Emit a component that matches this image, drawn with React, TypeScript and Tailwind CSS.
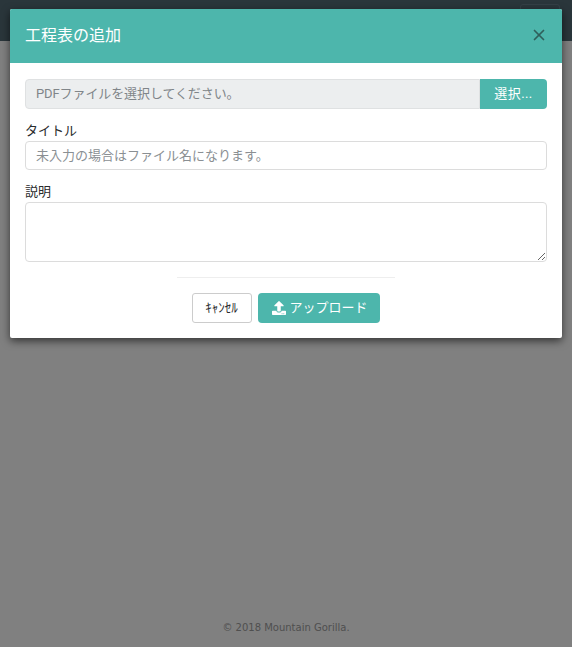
import { X } from "lucide-react";
import { FaUpload } from "react-icons/fa";

const font = "font-['Roboto','Noto_Sans_CJK_JP',sans-serif]";

function UploadModal() {
  return (
    <div className="absolute left-[10px] top-[9px] w-[552px] rounded-[2px] bg-white shadow-[0_3px_9px_rgba(0,0,0,0.6)]">
      {/* Header */}
      <div className="flex h-[54px] items-center justify-between rounded-t-[2px] bg-[#4db6ac] pl-[15px] pr-[14px]">
        <h4 className="pb-[1px] text-[16px] leading-none text-white">工程表の追加</h4>
        <X className="mb-[2px] h-[18px] w-[18px] text-[#2f5f5b]" strokeWidth={2.25} />
      </div>

      {/* Body */}
      <div className="px-[15px] pt-[16px]">
        <div className="flex h-[30px]">
          <div className="flex flex-1 items-center rounded-l-[4px] border border-[#dfe1e2] bg-[#eceeef] px-[10px] text-[13px] tracking-[-0.1px] text-[#808589]">
            PDFファイルを選択してください。
          </div>
          <div className="flex w-[67px] items-center justify-center rounded-r-[4px] bg-[#4db6ac] text-[13px] tracking-[0.4px] text-white">
            選択...
          </div>
        </div>

        <label className="mt-[12px] block h-[20px] text-[13px] leading-[20px] text-[#292b2c]">タイトル</label>
        <input
          readOnly
          placeholder="未入力の場合はファイル名になります。"
          className="block h-[29px] w-full rounded-[4px] border border-[#dcdcdc] bg-white px-[10px] text-[13px] outline-none placeholder:text-[#8a8f93]"
        />

        <label className="mt-[11px] block h-[21px] text-[13px] leading-[21px] text-[#292b2c]">説明</label>
        <textarea
          readOnly
          className="block h-[60px] w-full rounded-[4px] border border-[#dcdcdc] bg-white px-[10px] outline-none"
        />

        <div className="mx-auto mt-[15px] w-[218px] border-t border-[#eeeeee]" />

        <div className="mt-[15px] flex justify-center gap-[6px] pb-[15px] pr-[1px]">
          <button className="h-[30px] w-[60px] rounded-[3px] border border-[#cccccc] bg-white pb-[1px] text-[13px] leading-none text-[#292b2c]">
            ｷｬﾝｾﾙ
          </button>
          <button className="flex h-[30px] w-[122px] items-center gap-[4px] rounded-[4px] bg-[#4db6ac] pb-[1px] pl-[14px] text-[13px] leading-none text-white">
            <FaUpload className="h-[14px] w-[14px]" />
            アップロード
          </button>
        </div>
      </div>
    </div>
  );
}

export default function App() {
  return (
    <div className={`relative flex h-[647px] flex-col overflow-hidden bg-[#808080] ${font}`}>
      <div className="flex h-[41px] justify-end bg-[#2a363b] pr-[12px] pt-[4px]">
        <div className="h-[20px] w-[40px] rounded-[3px] border border-[#344046]" />
      </div>
      <div className="flex-1" />
      <footer className="h-[27px] text-center font-['DejaVu_Sans',sans-serif] text-[10px] text-[#4f4f4f]">
        © 2018 Mountain Gorilla.
      </footer>
      <UploadModal />
    </div>
  );
}
